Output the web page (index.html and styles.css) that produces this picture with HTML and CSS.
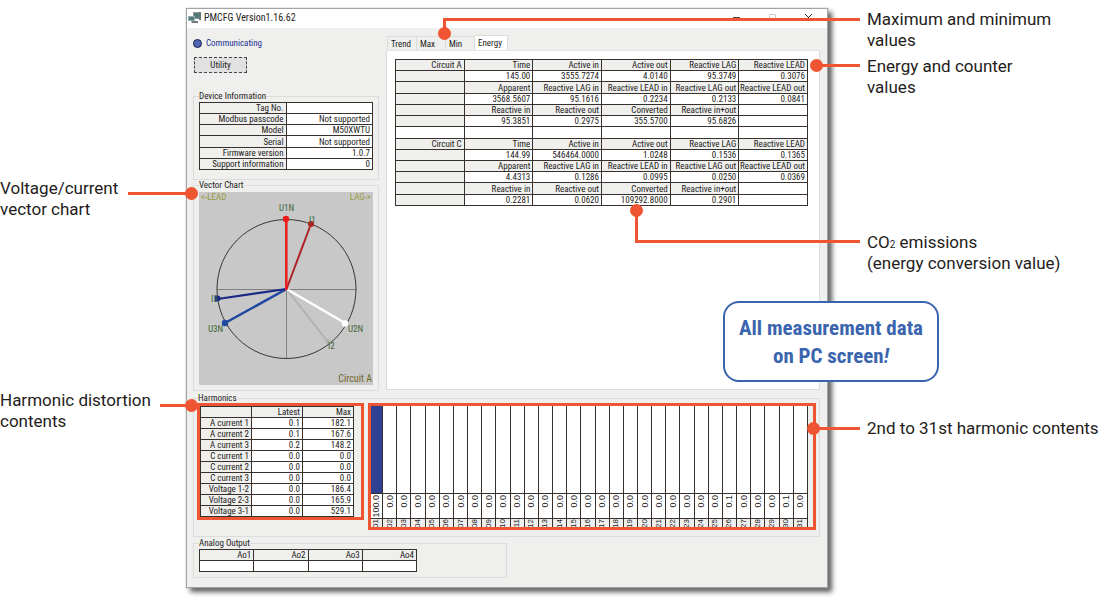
FILE: index.html
```html
<!DOCTYPE html>
<html lang="en">
<head>
<meta charset="utf-8">
<title>PMCFG monitoring screen</title>
<link rel="stylesheet" href="styles.css">
</head>
<body>
<main class="figure">
  <div class="notes notes-left">
    <p class="note note-vector">Voltage/current<br>vector chart</p>
    <p class="note note-distortion">Harmonic distortion<br>contents</p>
  </div>

  <section class="window">
    <header class="titlebar">
      <svg class="app-icon" width="13" height="11" viewBox="0 0 13 11" aria-hidden="true">
        <path d="M5 0h7v7H5z" fill="#8d9b9d"/><path d="M6 1h5v5H6z" fill="#4f7876"/>
        <path d="M11 0h2v8h-2z" fill="#66757a"/>
        <path d="M0 4h7v5H0z" fill="#9fadaf"/><path d="M1 5h5v3H1z" fill="#4d7e7b"/>
        <path d="M3 9h7v2H4z" fill="#6d7a7e"/>
      </svg>
      <h1 class="title">PMCFG Version1.16.62</h1>
      <div class="controls">
        <button class="control" aria-label="Minimize"><svg width="9" height="9" viewBox="0 0 9 9"><path d="M1 4.500h7" stroke="#444"/></svg></button>
        <button class="control" aria-label="Maximize"><svg width="9" height="9" viewBox="0 0 9 9"><path d="M1.500 1.500h6v6h-6z" fill="none" stroke="#d0cccc"/></svg></button>
        <button class="control" aria-label="Close"><svg width="9" height="9" viewBox="0 0 9 9"><path d="M1 1l7 7M8 1L1 8" stroke="#333"/></svg></button>
      </div>
    </header>

    <div class="content">
      <div class="top">
        <div class="side">
          <p class="status"><span class="led"></span>Communicating</p>
          <button class="utility">Utility</button>
          <fieldset class="group device">
            <legend>Device Information</legend>
            <table class="grid device-table">
              <tr><th>Tag No.</th><td></td></tr>
              <tr><th>Modbus passcode</th><td>Not supported</td></tr>
              <tr><th>Model</th><td>M50XWTU</td></tr>
              <tr><th>Serial</th><td>Not supported</td></tr>
              <tr><th>Firmware version</th><td>1.0.7</td></tr>
              <tr><th>Support information</th><td>0</td></tr>
            </table>
          </fieldset>
          <fieldset class="group vector">
            <legend>Vector Chart</legend>
            <svg class="vector-chart" viewBox="0 0 174 193" role="img" aria-label="Voltage and current vectors">
              <rect width="174" height="193" fill="#c8c8c8"/>
              <path d="M18 97.500H157M87.500 97V167" stroke="#808080" fill="none"/>
              <circle cx="87.500" cy="97" r="69.500" fill="none" stroke="#3a3533"/>
              <g stroke-linecap="butt">
                <path d="M87.500 97L129 150" stroke="#b2b2b2" stroke-width="2"/>
                <path d="M87.500 97L146 131" stroke="#fff" stroke-width="2.500"/>
                <path d="M87.500 97L112 32" stroke="#ad2325" stroke-width="2"/>
                <path d="M87.500 97L26 131" stroke="#20489f" stroke-width="2.500"/>
                <path d="M87.500 97L18.500 107" stroke="#182a86" stroke-width="2.200"/>
                <path d="M87.300 98V27" stroke="#ec1c1c" stroke-width="2.500"/>
              </g>
              <circle cx="87" cy="27" r="3.200" fill="#ec1c1c"/>
              <circle cx="112" cy="32" r="3" fill="#ad2325"/>
              <circle cx="18.500" cy="106.500" r="3" fill="#182a86"/>
              <circle cx="26" cy="131" r="3.200" fill="#20489f"/>
              <circle cx="146" cy="131.500" r="3.200" fill="#fff"/>
              <circle cx="129" cy="149.500" r="2.500" fill="#b2b2b2"/>
              <g class="vector-labels">
                <text x="80" y="19">U1N</text><text x="110" y="31">I1</text>
                <text x="12" y="110">I3</text><text x="9" y="140">U3N</text>
                <text x="149" y="140">U2N</text><text x="129" y="157">I2</text>
              </g>
              <g class="vector-hints">
                <text x="2" y="8">&lt;-LEAD</text><text x="172" y="8" text-anchor="end">LAG-&gt;</text>
              </g>
              <text class="vector-circuit" x="173" y="190" text-anchor="end">Circuit A</text>
            </svg>
          </fieldset>
        </div>

        <div class="views">
          <div class="tabs" role="tablist">
            <button class="tab" role="tab">Trend</button>
            <button class="tab" role="tab">Max</button>
            <button class="tab" role="tab">Min</button>
            <button class="tab tab-active" role="tab" aria-selected="true">Energy</button>
          </div>
          <div class="panel" role="tabpanel">
            <table class="grid energy-table">
              <tr><th>Circuit A</th><th>Time</th><th>Active in</th><th>Active out</th><th>Reactive LAG</th><th>Reactive LEAD</th></tr>
              <tr><th></th><td>145.00</td><td>3555.7274</td><td>4.0140</td><td>95.3749</td><td>0.3076</td></tr>
              <tr><th></th><th>Apparent</th><th>Reactive LAG in</th><th>Reactive LEAD in</th><th>Reactive LAG out</th><th>Reactive LEAD out</th></tr>
              <tr><th></th><td>3568.5607</td><td>95.1616</td><td>0.2234</td><td>0.2133</td><td>0.0841</td></tr>
              <tr><th></th><th>Reactive in</th><th>Reactive out</th><th>Converted</th><th>Reactive in+out</th><td></td></tr>
              <tr><th></th><td>95.3851</td><td>0.2975</td><td>355.5700</td><td>95.6826</td><td></td></tr>
              <tr><td></td><td></td><td></td><td></td><td></td><td></td></tr>
              <tr><th>Circuit C</th><th>Time</th><th>Active in</th><th>Active out</th><th>Reactive LAG</th><th>Reactive LEAD</th></tr>
              <tr><th></th><td>144.99</td><td>546464.0000</td><td>1.0248</td><td>0.1536</td><td>0.1365</td></tr>
              <tr><th></th><th>Apparent</th><th>Reactive LAG in</th><th>Reactive LEAD in</th><th>Reactive LAG out</th><th>Reactive LEAD out</th></tr>
              <tr><th></th><td>4.4313</td><td>0.1286</td><td>0.0995</td><td>0.0250</td><td>0.0369</td></tr>
              <tr><th></th><th>Reactive in</th><th>Reactive out</th><th>Converted</th><th>Reactive in+out</th><td></td></tr>
              <tr><th></th><td>0.2281</td><td>0.0620</td><td>109292.8000</td><td>0.2901</td><td></td></tr>
            </table>
          </div>
        </div>
      </div>

      <fieldset class="group harmonics">
        <legend>Harmonics</legend>
        <div class="harmonics-row">
          <div class="framed frame-table">
            <table class="grid harmonics-table">
              <tr><th></th><th>Latest</th><th>Max</th></tr>
              <tr><th>A current 1</th><td>0.1</td><td>182.1</td></tr>
              <tr><th>A current 2</th><td>0.1</td><td>167.6</td></tr>
              <tr><th>A current 3</th><td>0.2</td><td>148.2</td></tr>
              <tr><th>C current 1</th><td>0.0</td><td>0.0</td></tr>
              <tr><th>C current 2</th><td>0.0</td><td>0.0</td></tr>
              <tr><th>C current 3</th><td>0.0</td><td>0.0</td></tr>
              <tr><th>Voltage 1-2</th><td>0.0</td><td>186.4</td></tr>
              <tr><th>Voltage 2-3</th><td>0.0</td><td>165.9</td></tr>
              <tr><th>Voltage 3-1</th><td>0.0</td><td>529.1</td></tr>
            </table>
          </div>
          <div class="framed frame-spectrum">
            <table class="spectrum">
              <tr class="bars"><td><div class="bar"></div></td><td></td><td></td><td></td><td></td><td></td><td></td><td></td><td></td><td></td><td></td><td></td><td></td><td></td><td></td><td></td><td></td><td></td><td></td><td></td><td></td><td></td><td></td><td></td><td></td><td></td><td></td><td></td><td></td><td></td><td></td></tr>
              <tr class="levels"><td><span>100.0</span></td><td><span>0.0</span></td><td><span>0.0</span></td><td><span>0.0</span></td><td><span>0.0</span></td><td><span>0.0</span></td><td><span>0.0</span></td><td><span>0.0</span></td><td><span>0.0</span></td><td><span>0.0</span></td><td><span>0.0</span></td><td><span>0.0</span></td><td><span>0.0</span></td><td><span>0.0</span></td><td><span>0.0</span></td><td><span>0.0</span></td><td><span>0.0</span></td><td><span>0.0</span></td><td><span>0.0</span></td><td><span>0.0</span></td><td><span>0.0</span></td><td><span>0.0</span></td><td><span>0.0</span></td><td><span>0.0</span></td><td><span>0.0</span></td><td><span>0.1</span></td><td><span>0.0</span></td><td><span>0.0</span></td><td><span>0.0</span></td><td><span>0.1</span></td><td><span>0.0</span></td></tr>
              <tr class="orders"><th><span>01</span></th><th><span>02</span></th><th><span>03</span></th><th><span>04</span></th><th><span>05</span></th><th><span>06</span></th><th><span>07</span></th><th><span>08</span></th><th><span>09</span></th><th><span>10</span></th><th><span>11</span></th><th><span>12</span></th><th><span>13</span></th><th><span>14</span></th><th><span>15</span></th><th><span>16</span></th><th><span>17</span></th><th><span>18</span></th><th><span>19</span></th><th><span>20</span></th><th><span>21</span></th><th><span>22</span></th><th><span>23</span></th><th><span>24</span></th><th><span>25</span></th><th><span>26</span></th><th><span>27</span></th><th><span>28</span></th><th><span>29</span></th><th><span>30</span></th><th><span>31</span></th></tr>
            </table>
          </div>
        </div>
      </fieldset>

      <fieldset class="group analog">
        <legend>Analog Output</legend>
        <table class="grid analog-table">
          <tr><th>Ao1</th><th>Ao2</th><th>Ao3</th><th>Ao4</th></tr>
          <tr><td></td><td></td><td></td><td></td></tr>
        </table>
      </fieldset>
    </div>

    <div class="pointers" aria-hidden="true">
      <i class="line max-line"></i><i class="line max-stem"></i><i class="dot max-dot"></i>
      <i class="line energy-line"></i><i class="dot energy-dot"></i>
      <i class="line co2-line"></i><i class="line co2-stem"></i><i class="dot co2-dot"></i>
      <i class="line orders-line"></i><i class="dot orders-dot"></i>
      <i class="line vector-line"></i><i class="dot vector-dot"></i>
      <i class="line distortion-line"></i><i class="dot distortion-dot"></i>
    </div>
    <p class="badge">All measurement data<br>on PC screen<em>!</em></p>
  </section>

  <div class="notes notes-right">
    <p class="note">Maximum and minimum<br>values</p>
    <p class="note note-energy">Energy and counter<br>values</p>
    <p class="note note-co2">CO<small>2</small> emissions<br>(energy conversion value)</p>
    <p class="note note-orders">2nd to 31st harmonic contents</p>
  </div>
</main>
</body>
</html>
```
FILE: styles.css
```css
* { box-sizing: border-box; }

:root {
  --accent: #ef5533;
  --ink: #241c1a;
  --rule: #38302d;
  --face: #efefee;
  --edge: #dcdcdc;
}

body { margin: 0; background: #fff; color: var(--ink); }

p, h1 { margin: 0; font-weight: normal; }

.figure {
  display: grid;
  grid-template-columns: 187px minmax(600px, 1fr) 273px;
  align-items: start;
  padding: 9px 0 14px;
}

/* Notes on both sides */
.notes {
  display: flex;
  flex-direction: column;
  font: 17px/21px Roboto, sans-serif;
  white-space: nowrap;
}
.notes-right { padding-left: 40px; }
.note small { font-size: 10px; line-height: 10px; }
.note-vector { margin-top: 169px; }
.note-distortion { margin-top: 170px; }
.note-energy { margin-top: 5px; }
.note-co2 { margin-top: 134px; }
.note-orders { margin-top: 144px; }

/* Application window */
.window {
  position: relative;
  background: var(--face);
  box-shadow: 0 0 1px 1px #a4a4a4, 4px 4px 5px 1px rgba(40, 40, 40, .75);
  font: 9px/10px "Roboto Condensed", Roboto, sans-serif;
}
.titlebar {
  display: flex;
  align-items: center;
  height: 19px;
  padding: 0 14px 2px 1px;
  background: #fff;
}
.title {
  margin-left: 3px;
  font: 10px/14px "Roboto Condensed", Roboto, sans-serif;
}
.controls { display: flex; gap: 27px; margin-left: auto; }
.control {
  display: flex;
  padding: 0;
  border: 0;
  background: none;
}

.content { padding: 0 7px 9px 6px; }
.top {
  display: grid;
  grid-template-columns: 186px 1fr;
  gap: 7px;
}
.side { display: flex; flex-direction: column; padding-top: 10px; }
.status { display: flex; align-items: center; gap: 4px; color: #1c3190; }
.led {
  width: 9px;
  height: 9px;
  border: 1px solid #1b2350;
  border-radius: 50%;
  background: #5264b4;
}
.utility {
  align-self: flex-start;
  width: 53px;
  height: 16px;
  margin: 9px 0 18px 1px;
  padding: 0;
  border: 1px dashed #444;
  background: #e1e1e1;
  color: var(--ink);
  font: inherit;
}

.group {
  min-width: 0;
  margin: 0;
  padding: 0 5px;
  border: 1px solid var(--edge);
}
.group legend { padding: 0; line-height: 10px; }
.device { padding-top: 1px; padding-bottom: 9px; }
.vector { padding-top: 2px; padding-bottom: 5px; }
.vector-chart { display: block; width: 100%; }
.vector-labels { font: 9px "Roboto Condensed", Roboto, sans-serif; fill: #3f6335; }
.vector-hints { font: 9px "Roboto Condensed", Roboto, sans-serif; fill: #98983c; }
.vector-circuit { font: 10px "Roboto Condensed", Roboto, sans-serif; fill: #6f6626; }

/* Bordered data tables */
.grid {
  width: 100%;
  table-layout: fixed;
  border-collapse: collapse;
  background: #fff;
}
.grid th, .grid td {
  height: 11px;
  padding: 0 2px 0 0;
  border: 1px solid var(--rule);
  font-weight: normal;
  line-height: 10px;
  text-align: right;
  white-space: nowrap;
}
.grid th { background: var(--face); }
.device-table { height: 68px; }

.views { display: flex; flex-direction: column; padding: 7px 0 1px; }
.tabs { display: flex; align-items: flex-end; padding-left: 1px; }
.tab {
  width: 29px;
  height: 14px;
  padding: 0 0 0 3px;
  border: 1px solid var(--edge);
  border-width: 1px 0 0 1px;
  background: var(--face);
  color: var(--ink);
  font: inherit;
  text-align: left;
}
.tab-active { width: 34px; height: 15px; border-right-width: 1px; background: #fff; }
.panel {
  flex: 1;
  padding: 8px 11px 0 8px;
  border: 1px solid var(--edge);
  border-top-color: #e6e6e6;
  background: #fff;
}
.energy-table { height: 147px; }

/* Harmonics */
.harmonics { margin-top: 2px; padding: 0 3px 6px; }
.harmonics legend { margin-left: 1px; }
.harmonics-row {
  display: grid;
  grid-template-columns: 167px 1fr;
  gap: 4px;
  align-items: start;
}
.framed { border: 3px solid var(--accent); }
.frame-table { padding: 0 7px 0 0; }
.harmonics-table { height: 111px; }
.frame-spectrum { position: relative; padding: 3px 8px 3px 0; border: 0; }
.frame-spectrum::after {
  content: "";
  position: absolute;
  inset: 0;
  border: 3px solid var(--accent);
}
.spectrum {
  width: 100%;
  table-layout: fixed;
  border-collapse: collapse;
  background: #fff;
  font: 9px/10px "Liberation Sans", sans-serif;
}
.spectrum td, .spectrum th {
  padding: 0;
  border: 1px solid var(--rule);
  border-width: 0 1px;
  font-weight: normal;
  vertical-align: top;
}
.bars td { height: 87px; }
.bar { height: 87px; background: #2e4195; }
.spectrum .levels td { height: 24px; padding-top: 1px; border-top-width: 1px; }
.spectrum .orders th { border-top-width: 1px; background: var(--face); font-size: 8px; }
.spectrum span {
  display: block;
  margin: 0 auto;
  writing-mode: vertical-rl;
  transform: rotate(180deg);
}

.analog { width: 314px; max-width: 100%; margin-top: 1px; padding: 1px 89px 5px 5px; }

/* Pointers from the notes into the window */
.line, .dot { position: absolute; background: var(--accent); }
.line { height: 3px; }
.dot { width: 13px; height: 13px; border-radius: 50%; }
.max-line { top: 9px; left: 256px; right: -33px; }
.max-stem { top: 9px; left: 256px; width: 3px; height: 16px; }
.max-dot { top: 18px; left: 251px; }
.energy-line { top: 55px; right: -33px; width: 44px; }
.energy-dot { top: 50px; right: 4px; }
.co2-line { top: 231px; right: -33px; left: 448px; }
.co2-stem { top: 201px; left: 448px; width: 3px; height: 33px; }
.co2-dot { top: 195px; left: 443px; }
.orders-line { top: 418px; right: -33px; width: 44px; }
.orders-dot { top: 413px; right: 7px; }
.vector-line { top: 183px; left: -59px; width: 63px; }
.vector-dot { top: 178px; left: -2px; }
.distortion-line { top: 395px; left: -27px; width: 31px; }
.distortion-dot { top: 390px; left: -2px; }

.badge {
  position: absolute;
  top: 292px;
  right: -112px;
  width: 216px;
  padding: 11px 0 10px;
  border: 2px solid #3a65ae;
  border-radius: 16px;
  background: #fff;
  color: #3a65ae;
  font: bold 21px/28px "Roboto Condensed", "Liberation Sans Narrow", "Liberation Sans", sans-serif;
  text-align: center;
  white-space: nowrap;
}
```
